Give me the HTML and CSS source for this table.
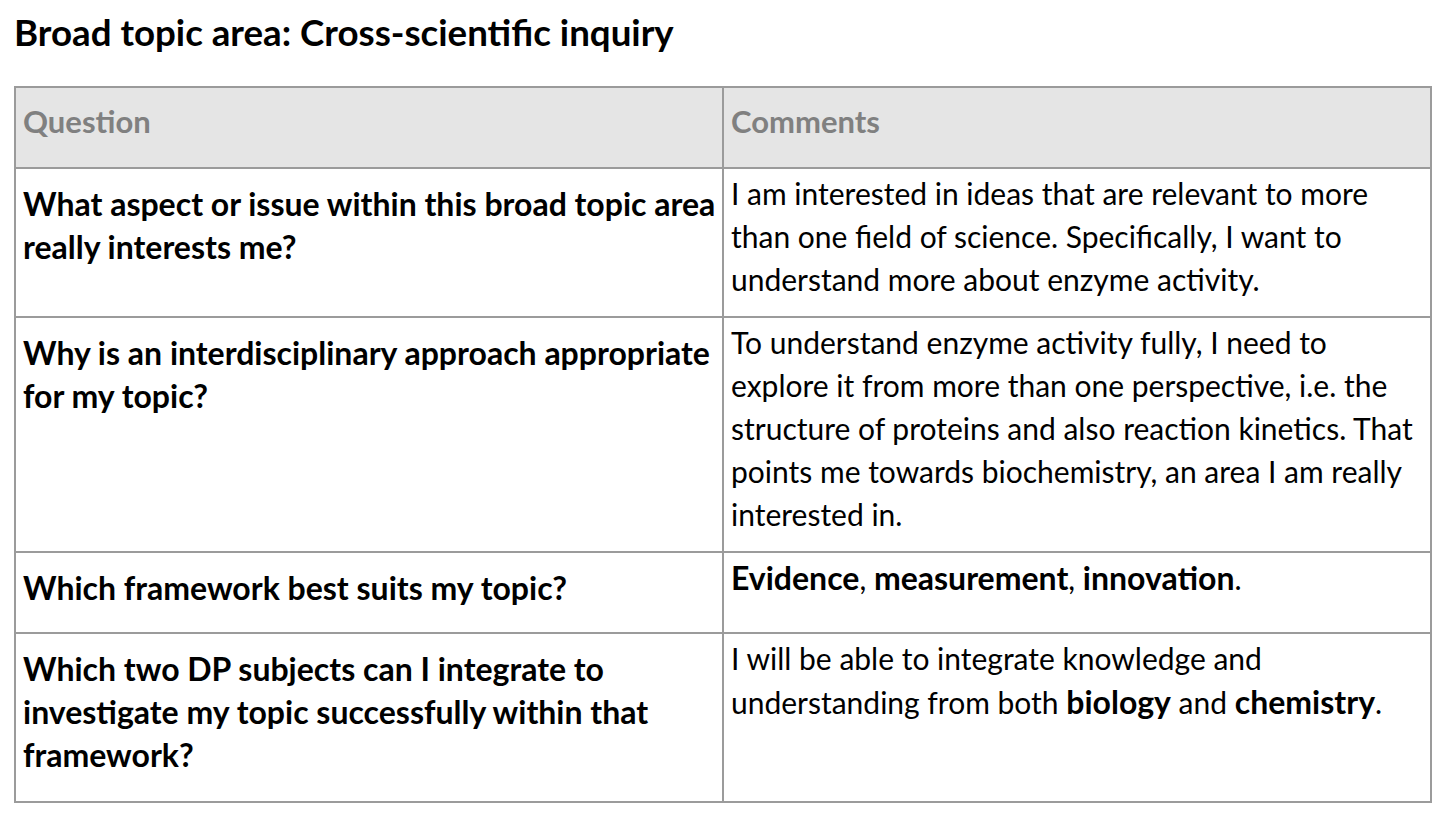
FILE: index.html
```html
<!DOCTYPE html>
<html lang="en">
<head>
<meta charset="utf-8">
<title>Broad topic area</title>
<link rel="stylesheet" href="styles.css">
</head>
<body>
<h1 class="title">Broad topic area: Cross-scientific inquiry</h1>
<table class="grid">
  <thead>
    <tr>
      <th class="head">Question</th>
      <th class="head">Comments</th>
    </tr>
  </thead>
  <tbody>
    <tr>
      <td class="q">What aspect or issue within this broad topic area really interests me?</td>
      <td class="c">I am interested in ideas that are relevant to more than one field of science. Specifically, I want to understand more about enzyme activity.</td>
    </tr>
    <tr>
      <td class="q">Why is an interdisciplinary approach appropriate for my topic?</td>
      <td class="c">To understand enzyme activity fully, I need to explore it from more than one perspective, i.e. the structure of proteins and also reaction kinetics. That points me towards biochemistry, an area I am really interested in.</td>
    </tr>
    <tr>
      <td class="q">Which framework best suits my topic?</td>
      <td class="c"><b>Evidence</b>, <b>measurement</b>, <b>innovation</b>.</td>
    </tr>
    <tr class="last">
      <td class="q">Which two DP subjects can I integrate to investigate my topic successfully within that framework?</td>
      <td class="c">I will be able to integrate knowledge and understanding from both <b>biology</b> and <b>chemistry</b>.</td>
    </tr>
  </tbody>
</table>
</body>
</html>
```
FILE: styles.css
```css
html, body {
  margin: 0;
  padding: 0;
  background: #ffffff;
}
body {
  font-family: Lato, "Liberation Sans", sans-serif;
  color: #000;
  padding: 0 22px 0 14px;
}
.title {
  margin: 0;
  padding: 11px 0 0 0;
  font-size: 36.7px;
  line-height: 42px;
  font-weight: 700;
  height: 86px;
  box-sizing: border-box;
}
.grid {
  width: 100%;
  border-collapse: collapse;
  table-layout: fixed;
  border: 2px solid #9b9b9b;
}
.grid th, .grid td {
  border: 2px solid #9b9b9b;
  vertical-align: top;
  text-align: left;
  line-height: 43px;
}
.head {
  background: #e5e5e5;
  color: #808080;
  font-size: 31px;
  font-weight: 700;
  padding: 12px 2px 24px 7px;
}
.q {
  font-size: 32px;
  font-weight: 700;
  padding: 13px 2px 23px 7px;
}
.last .q {
  padding-bottom: 25px;
}
.c {
  font-size: 30px;
  font-weight: 400;
  padding: 3px 2px 15px 7px;
}
.c b {
  font-weight: 700;
  font-size: 32px;
}
```
